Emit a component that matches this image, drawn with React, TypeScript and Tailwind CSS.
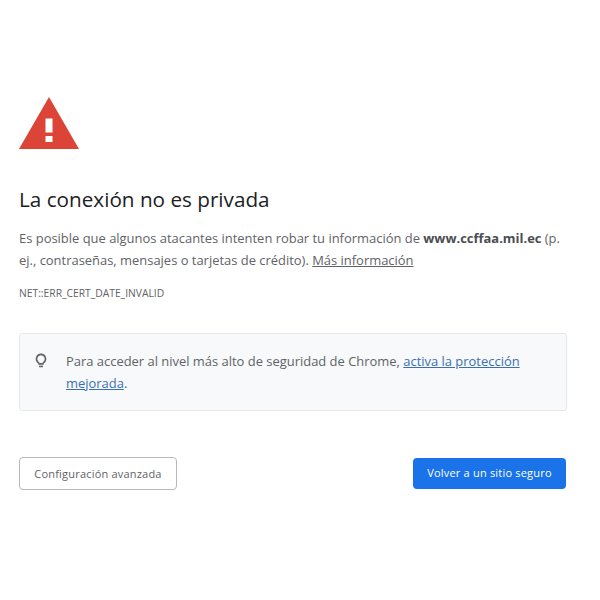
const font = "font-['Open_Sans','Noto_Sans',sans-serif]"

export default function App() {
  return (
    <div className={`${font} min-h-[600px] bg-white pt-[97px] pl-[19px] pr-[33px] text-[#5f6368]`}>
      {/* Warning icon */}
      <svg width="60" height="52" viewBox="0 0 60 52" className="block">
        <path d="M30 0 L60 52 H0 Z" fill="#db4437" />
        <rect x="26.5" y="21.5" width="7" height="14" fill="#fff" />
        <rect x="26.5" y="39" width="7" height="6" fill="#fff" />
      </svg>

      <h1 className="mt-[36px] text-[20.7px] leading-[28px] font-normal text-[#202124]">La conexión no es privada</h1>

      <p className="mt-[14px] text-[12.95px] leading-[22px]">
        Es posible que algunos atacantes intenten robar tu información de{' '}
        <strong className="font-bold text-[#4a4d51]">www.ccffaa.mil.ec</strong> (p. ej., contraseñas, mensajes o tarjetas de crédito).{' '}
        <a className="underline">Más información</a>
      </p>

      <p className="mt-[15px] text-[10.3px] leading-[14px]">NET::ERR_CERT_DATE_INVALID</p>

      {/* Enhanced protection notice */}
      <div className="mt-[33px] flex h-[78px] gap-[18px] rounded-[3px] border border-[#e6e8eb] bg-[#f7f9fa] pt-[16px] pl-[14px] pr-[30px]">
        <svg width="14" height="16" viewBox="0 0 18 20" fill="none" stroke="#5f6368" strokeWidth="2" className="mt-[3px] shrink-0">
          <path d="M9 1.5a5.8 5.8 0 0 0-3.4 10.5c.6.5.9 1 .9 1.7h5c0-.7.3-1.2.9-1.7A5.8 5.8 0 0 0 9 1.5Z" />
          <path d="M6.5 17h5" />
        </svg>
        <p className="text-[12.95px] leading-[22px]">
          Para acceder al nivel más alto de seguridad de Chrome, <a className="text-[#3b6fb5] underline">activa la protección mejorada</a>.
        </p>
      </div>

      <div className="mt-[46px] mr-px flex items-center justify-between">
        <button className="h-[33px] w-[158px] rounded-[4px] border border-[#b4b7bb] bg-white pt-[2px] text-[11px] tracking-[0.2px] text-[#5f6368]">
          Configuración avanzada
        </button>
        <button className="h-[31px] w-[153px] rounded-[4px] bg-[#1a73e8] text-[11px] tracking-[0.2px] text-white">
          Volver a un sitio seguro
        </button>
      </div>
    </div>
  )
}
